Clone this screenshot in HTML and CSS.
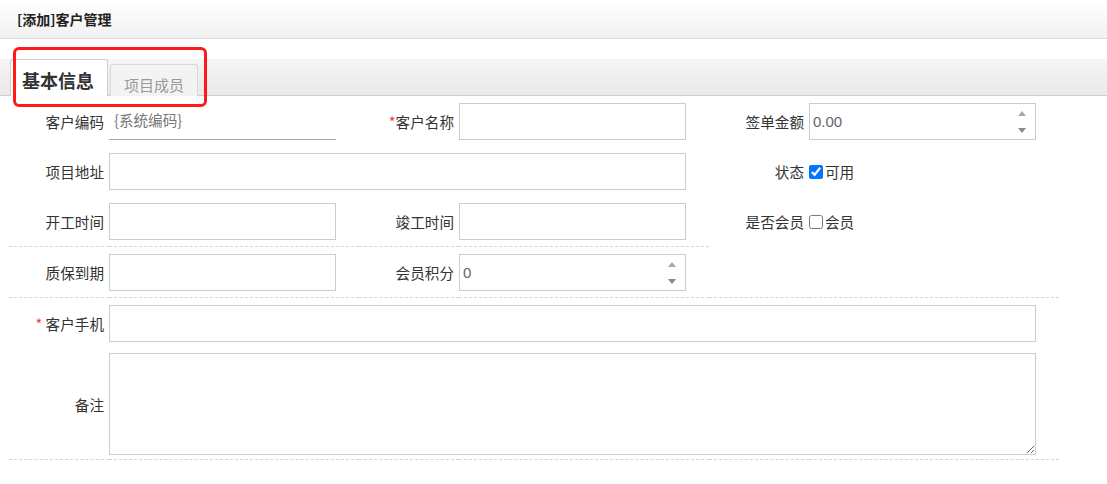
FILE: index.html
```html
<!DOCTYPE html>
<html lang="zh-CN">
<head>
<meta charset="utf-8">
<title>[添加]客户管理</title>
<link rel="stylesheet" href="styles.css">
</head>
<body>
<div class="header"><span class="title">[添加]客户管理</span></div>
<div class="tabwrap">
  <div class="tabbar">
    <div class="tab active">基本信息</div>
    <div class="tab">项目成员</div>
  </div>
  <div class="highlight"></div>
</div>
<table class="form">
  <colgroup>
    <col class="c-label"><col class="c-field">
    <col class="c-label"><col class="c-field">
    <col class="c-label"><col class="c-field">
  </colgroup>
  <tr>
    <td class="lbl">客户编码</td>
    <td><div class="readonly">{系统编码}</div></td>
    <td class="lbl"><span class="req">*</span>客户名称</td>
    <td><input class="inp" type="text"></td>
    <td class="lbl">签单金额</td>
    <td><div class="num"><input class="inp val" type="text" value="0.00"><span class="spin"><i class="up"></i><i class="down"></i></span></div></td>
  </tr>
  <tr>
    <td class="lbl">项目地址</td>
    <td colspan="3"><input class="inp wide2" type="text"></td>
    <td class="lbl">状态</td>
    <td><label class="chk"><input type="checkbox" checked>可用</label></td>
  </tr>
  <tr>
    <td class="lbl dash">开工时间</td>
    <td class="dash"><input class="inp" type="text"></td>
    <td class="lbl dash">竣工时间</td>
    <td class="dash"><input class="inp" type="text"></td>
    <td class="lbl">是否会员</td>
    <td><label class="chk"><input type="checkbox">会员</label></td>
  </tr>
  <tr>
    <td class="lbl dash">质保到期</td>
    <td class="dash"><input class="inp" type="text"></td>
    <td class="lbl dash">会员积分</td>
    <td class="dash"><div class="num"><input class="inp val" type="text" value="0"><span class="spin"><i class="up"></i><i class="down"></i></span></div></td>
    <td class="dash"></td>
    <td class="dash"></td>
  </tr>
  <tr>
    <td class="lbl"><span class="req">*</span> 客户手机</td>
    <td colspan="5"><input class="inp wide3" type="text"></td>
  </tr>
  <tr class="memo">
    <td class="lbl dash">备注</td>
    <td colspan="5" class="dash"><textarea class="area"></textarea></td>
  </tr>
</table>
</body>
</html>
```
FILE: styles.css
```css
html, body {
  margin: 0;
  padding: 0;
  background: #fff;
  font-family: "Liberation Sans", "Noto Sans CJK SC", sans-serif;
  color: #333;
}
.header {
  height: 38px;
  border-bottom: 1px solid #dcdcdc;
  background: linear-gradient(#ffffff, #f1f1f1);
  display: flex;
  align-items: center;
  padding-left: 17px;
}
.title {
  font-family: "Noto Sans CJK SC", sans-serif;
  font-size: 14px;
  font-weight: bold;
  color: #222;
}
.tabwrap {
  position: relative;
  padding-top: 20px;
}
.tabbar {
  height: 36px;
  border-bottom: 1px solid #cfcfcf;
  background: linear-gradient(#f5f5f5, #e9e9e9);
  display: flex;
  align-items: flex-end;
  padding-left: 10px;
  gap: 2px;
}
.tab {
  font-family: "Noto Sans CJK SC", sans-serif;
  box-sizing: border-box;
  width: 88px;
  height: 32px;
  margin-bottom: -1px;
  border: 1px solid #d8d8d8;
  border-bottom: none;
  border-radius: 3px 3px 0 0;
  background: #f3f3f3;
  color: #999;
  font-size: 15px;
  line-height: 1;
  display: flex;
  align-items: center;
  justify-content: center;
  padding-top: 8px;
}
.tab.active {
  width: 98px;
  height: 37px;
  background: #fff;
  color: #333;
  font-size: 18px;
  font-weight: bold;
  border-color: #cfcfcf;
  padding-top: 4px;
  padding-right: 2px;
}
.highlight {
  position: absolute;
  left: 13px;
  top: 8px;
  width: 194px;
  height: 60px;
  box-sizing: border-box;
  border: 3px solid #ff1a1a;
  border-radius: 6px;
}
.form {
  margin-left: 9px;
  border-collapse: collapse;
  table-layout: fixed;
  width: 1050px;
}
.c-label { width: 100px; }
.c-field { width: 250px; }
.form td {
  padding: 7px 0 6px 0;
  vertical-align: middle;
  font-family: "Noto Sans CJK SC", sans-serif;
  font-size: 14.6px;
  color: #333;
  height: 37px;
}
.form td.lbl {
  text-align: right;
  padding-right: 5px;
  white-space: nowrap;
}
.form td.dash {
  border-bottom: 1px dashed #d4d4d4;
}
.form tr.memo td {
  padding-top: 5px;
  padding-bottom: 4px;
}
.req {
  color: #f03c3c;
}
.inp {
  box-sizing: border-box;
  width: 227px;
  height: 37px;
  border: 1px solid #cccccc;
  margin: 0;
  padding: 0 3px;
  font-family: "Liberation Sans", sans-serif;
  font-size: 15px;
  color: #666;
  display: block;
  outline: none;
}
.inp.wide2 { width: 577px; }
.inp.wide3 { width: 927px; }
.readonly {
  box-sizing: border-box;
  width: 227px;
  height: 37px;
  border-bottom: 1px solid #aaaaaa;
  padding-left: 5px;
  line-height: 34px;
  color: #777;
  font-size: 14.6px;
}
.num {
  position: relative;
  width: 227px;
}
.spin {
  position: absolute;
  right: 10px;
  top: 8px;
  width: 9px;
  height: 22px;
  display: flex;
  flex-direction: column;
  justify-content: space-between;
  align-items: center;
}
.spin i {
  display: block;
  width: 0;
  height: 0;
  border-left: 4.5px solid transparent;
  border-right: 4.5px solid transparent;
}
.spin .up { border-bottom: 5px solid #a8a8a8; }
.spin .down { border-top: 5px solid #8a8a8a; }
.chk {
  display: flex;
  align-items: center;
  color: #333;
}
.chk input {
  margin: 0 2px 0 0;
  width: 14px;
  height: 14px;
}
.area {
  box-sizing: border-box;
  display: block;
  width: 927px;
  height: 102px;
  border: 1px solid #cccccc;
  margin: 0;
  padding: 3px;
  outline: none;
}
```
